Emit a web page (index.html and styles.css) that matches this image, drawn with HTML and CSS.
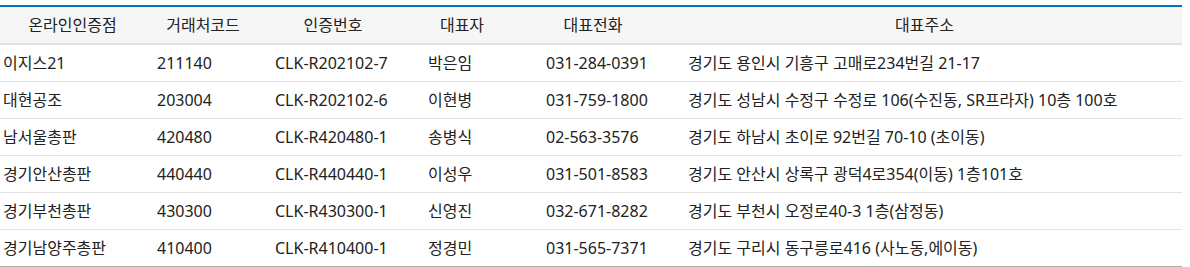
FILE: index.html
```html
<!DOCTYPE html>
<html lang="ko">
<head>
<meta charset="utf-8">
<link rel="stylesheet" href="styles.css">
</head>
<body>
<div class="table">
  <div class="row head">
    <div class="cell c1">온라인인증점</div>
    <div class="cell c2">거래처코드</div>
    <div class="cell c3">인증번호</div>
    <div class="cell c4">대표자</div>
    <div class="cell c5">대표전화</div>
    <div class="cell c6">대표주소</div>
  </div>
  <div class="row">
    <div class="cell c1">이지스21</div>
    <div class="cell c2">211140</div>
    <div class="cell c3">CLK-R202102-7</div>
    <div class="cell c4">박은임</div>
    <div class="cell c5">031-284-0391</div>
    <div class="cell c6">경기도 용인시 기흥구 고매로234번길 21-17</div>
  </div>
  <div class="row">
    <div class="cell c1">대현공조</div>
    <div class="cell c2">203004</div>
    <div class="cell c3">CLK-R202102-6</div>
    <div class="cell c4">이현병</div>
    <div class="cell c5">031-759-1800</div>
    <div class="cell c6">경기도 성남시 수정구 수정로 106(수진동, SR프라자) 10층 100호</div>
  </div>
  <div class="row">
    <div class="cell c1">남서울총판</div>
    <div class="cell c2">420480</div>
    <div class="cell c3">CLK-R420480-1</div>
    <div class="cell c4">송병식</div>
    <div class="cell c5">02-563-3576</div>
    <div class="cell c6">경기도 하남시 초이로 92번길 70-10 (초이동)</div>
  </div>
  <div class="row">
    <div class="cell c1">경기안산총판</div>
    <div class="cell c2">440440</div>
    <div class="cell c3">CLK-R440440-1</div>
    <div class="cell c4">이성우</div>
    <div class="cell c5">031-501-8583</div>
    <div class="cell c6">경기도 안산시 상록구 광덕4로354(이동) 1층101호</div>
  </div>
  <div class="row">
    <div class="cell c1">경기부천총판</div>
    <div class="cell c2">430300</div>
    <div class="cell c3">CLK-R430300-1</div>
    <div class="cell c4">신영진</div>
    <div class="cell c5">032-671-8282</div>
    <div class="cell c6">경기도 부천시 오정로40-3 1층(삼정동)</div>
  </div>
  <div class="row last">
    <div class="cell c1">경기남양주총판</div>
    <div class="cell c2">410400</div>
    <div class="cell c3">CLK-R410400-1</div>
    <div class="cell c4">정경민</div>
    <div class="cell c5">031-565-7371</div>
    <div class="cell c6">경기도 구리시 동구릉로416 (사노동,에이동)</div>
  </div>
</div>
</body>
</html>
```
FILE: styles.css
```css
html, body {
  margin: 0;
  padding: 0;
  background: #ffffff;
}
body {
  padding-top: 5px;
  font-family: "Noto Sans", "Noto Sans CJK KR", sans-serif;
  font-size: 16px;
  color: #222222;
}
.table {
  width: 1182px;
  border-top: 2px solid #0a74b8;
  border-bottom: 2px solid #b0b0b0;
}
.row {
  display: grid;
  grid-template-columns: 145px 116px 144px 114px 148px 515px;
  height: 36px;
  align-items: center;
  border-top: 1px solid #e2e2e2;
}
.row:nth-child(2) {
  border-top: 2px solid #e2e2e2;
}
.head {
  border-top: none;
  height: 36px;
  background: #f6f6f6;
}
.cell {
  white-space: nowrap;
  line-height: 20px;
}
.head .cell {
  text-align: center;
  padding: 0;
}
.c1 { padding-left: 3px; }
.c2 { padding-left: 12px; }
.c3 { padding-left: 14px; }
.c4 { padding-left: 23px; }
.c5 { padding-left: 27px; }
.c6 { padding-left: 21px; }
```
